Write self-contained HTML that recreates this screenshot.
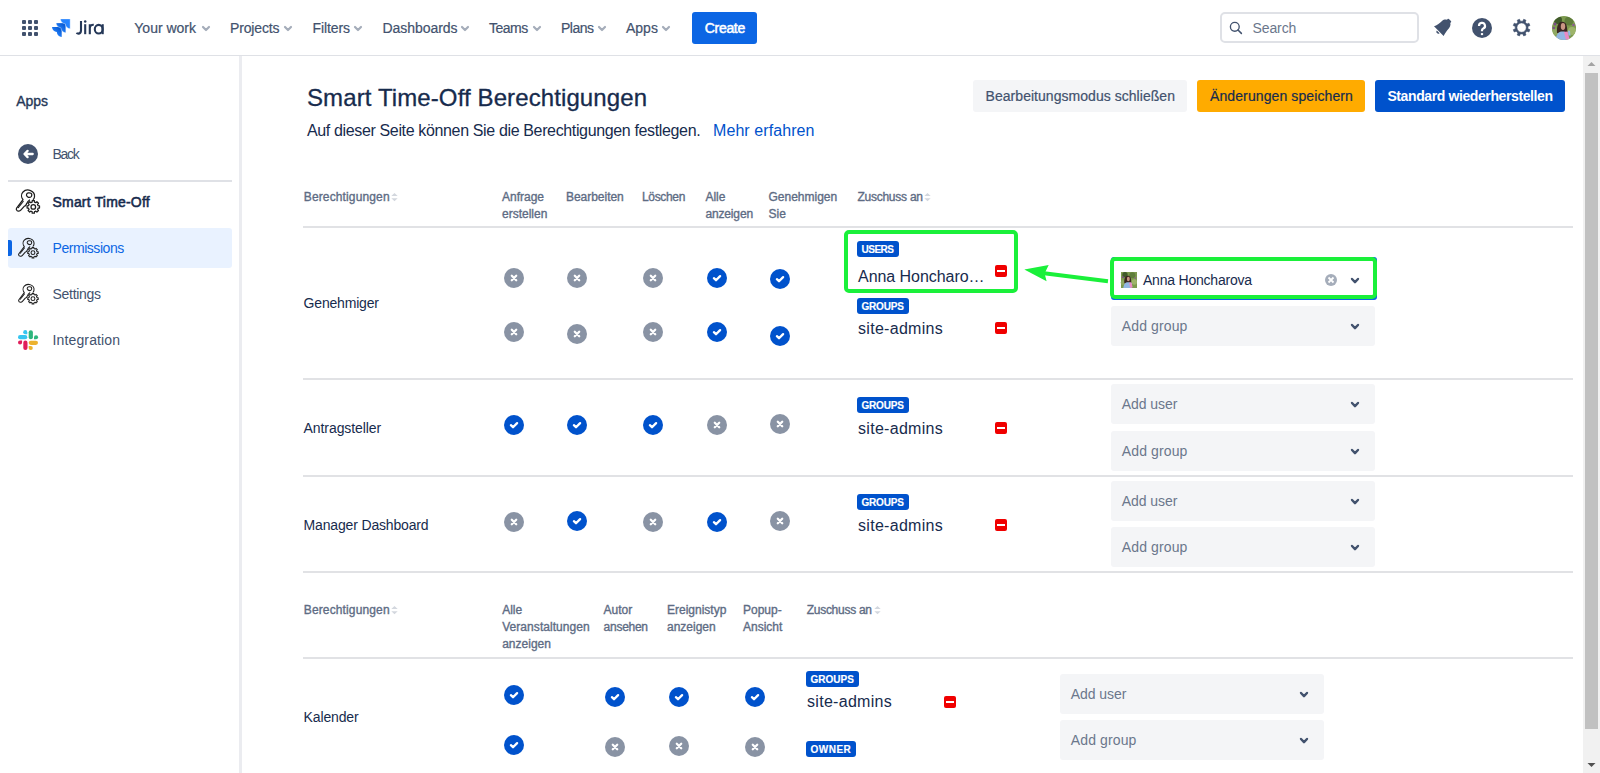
<!DOCTYPE html>
<html><head><meta charset="utf-8"><title>Smart Time-Off Berechtigungen</title>
<style>
html,body{margin:0;padding:0;width:1600px;height:773px;overflow:hidden;background:#fff;font-family:"Liberation Sans",sans-serif;}
.a{position:absolute;box-sizing:content-box;}
.t{position:absolute;white-space:nowrap;}
svg.a{display:block;overflow:visible}
</style></head><body>
<div class="a" style="left:0px;top:55px;width:1600px;height:1px;background:#dfe1e6;border-radius:0px;"></div>
<svg class="a" style="left:22px;top:20px" width="16" height="16" viewBox="0 0 16 16"><rect x="0" y="0" width="4" height="4" rx="1" fill="#42526e"/><rect x="6" y="0" width="4" height="4" rx="1" fill="#42526e"/><rect x="12" y="0" width="4" height="4" rx="1" fill="#42526e"/><rect x="0" y="6" width="4" height="4" rx="1" fill="#42526e"/><rect x="6" y="6" width="4" height="4" rx="1" fill="#42526e"/><rect x="12" y="6" width="4" height="4" rx="1" fill="#42526e"/><rect x="0" y="12" width="4" height="4" rx="1" fill="#42526e"/><rect x="6" y="12" width="4" height="4" rx="1" fill="#42526e"/><rect x="12" y="12" width="4" height="4" rx="1" fill="#42526e"/></svg>
<svg class="a" style="left:52px;top:18px" width="20" height="20" viewBox="0 0 20 20">
<defs><linearGradient id="jg" x1="0.95" y1="0.05" x2="0.35" y2="0.75"><stop offset="0" stop-color="#0050c8"/><stop offset="1" stop-color="#2684ff"/></linearGradient></defs>
<path d="M0,0 H9.7 V9.9 C7,9.7 5,7.6 4.8,4.9 C2.3,4.7 0.2,2.7 0,0 Z" transform="translate(0,9)" fill="url(#jg)"/>
<path d="M0,0 H9.7 V9.9 C7,9.7 5,7.6 4.8,4.9 C2.3,4.7 0.2,2.7 0,0 Z" transform="translate(4.1,4.9)" fill="url(#jg)" stroke="#fff" stroke-width="0.35"/>
<path d="M0,0 H9.7 V9.9 C7,9.7 5,7.6 4.8,4.9 C2.3,4.7 0.2,2.7 0,0 Z" transform="translate(8.45,0.9)" fill="#2684ff" stroke="#fff" stroke-width="0.35"/>
</svg>
<svg class="a" style="left:70px;top:14px" width="40" height="26" viewBox="70 14 40 26"><g fill="none" stroke="#253858" stroke-width="2.1" stroke-linecap="butt"><path d="M81,21 V30.2 C81,32.6 79.8,33.6 78.3,33.6 C77.6,33.6 77,33.4 76.4,33"/><path d="M85.2,24.2 V34.2"/><path d="M89.8,24.2 V34.2 M89.8,28.6 C89.8,25.8 91.3,24.6 93.8,24.7"/><ellipse cx="98.7" cy="29.2" rx="3.9" ry="4.3"/><path d="M102.7,24.2 V34.2"/></g><circle cx="85.2" cy="21.6" r="1.25" fill="#253858"/></svg>
<div class="t" style="left:134.30px;top:20.70px;font-size:14px;line-height:14px;color:#42526e;-webkit-text-stroke:0.2px #42526e;">Your work</div>
<svg class="a" style="left:202px;top:25.5px" width="8" height="5" viewBox="0 0 8 5"><path d="M1,1 L4.0,4 L7,1" fill="none" stroke="#a5adba" stroke-width="2.2" stroke-linecap="round" stroke-linejoin="round"/></svg>
<div class="t" style="left:230.00px;top:20.70px;font-size:14px;line-height:14px;color:#42526e;-webkit-text-stroke:0.2px #42526e;letter-spacing:-0.143px;">Projects</div>
<svg class="a" style="left:284px;top:25.5px" width="8" height="5" viewBox="0 0 8 5"><path d="M1,1 L4.0,4 L7,1" fill="none" stroke="#a5adba" stroke-width="2.2" stroke-linecap="round" stroke-linejoin="round"/></svg>
<div class="t" style="left:312.50px;top:20.70px;font-size:14px;line-height:14px;color:#42526e;-webkit-text-stroke:0.2px #42526e;letter-spacing:-0.083px;">Filters</div>
<svg class="a" style="left:354px;top:25.5px" width="8" height="5" viewBox="0 0 8 5"><path d="M1,1 L4.0,4 L7,1" fill="none" stroke="#a5adba" stroke-width="2.2" stroke-linecap="round" stroke-linejoin="round"/></svg>
<div class="t" style="left:382.50px;top:20.70px;font-size:14px;line-height:14px;color:#42526e;-webkit-text-stroke:0.2px #42526e;letter-spacing:-0.056px;">Dashboards</div>
<svg class="a" style="left:460.5px;top:25.5px" width="8" height="5" viewBox="0 0 8 5"><path d="M1,1 L4.0,4 L7,1" fill="none" stroke="#a5adba" stroke-width="2.2" stroke-linecap="round" stroke-linejoin="round"/></svg>
<div class="t" style="left:489.00px;top:20.70px;font-size:14px;line-height:14px;color:#42526e;-webkit-text-stroke:0.2px #42526e;letter-spacing:-0.500px;">Teams</div>
<svg class="a" style="left:532.5px;top:25.5px" width="8" height="5" viewBox="0 0 8 5"><path d="M1,1 L4.0,4 L7,1" fill="none" stroke="#a5adba" stroke-width="2.2" stroke-linecap="round" stroke-linejoin="round"/></svg>
<div class="t" style="left:561.00px;top:20.70px;font-size:14px;line-height:14px;color:#42526e;-webkit-text-stroke:0.2px #42526e;letter-spacing:-0.500px;">Plans</div>
<svg class="a" style="left:597.5px;top:25.5px" width="8" height="5" viewBox="0 0 8 5"><path d="M1,1 L4.0,4 L7,1" fill="none" stroke="#a5adba" stroke-width="2.2" stroke-linecap="round" stroke-linejoin="round"/></svg>
<div class="t" style="left:626.00px;top:20.70px;font-size:14px;line-height:14px;color:#42526e;-webkit-text-stroke:0.2px #42526e;">Apps</div>
<svg class="a" style="left:662px;top:25.5px" width="8" height="5" viewBox="0 0 8 5"><path d="M1,1 L4.0,4 L7,1" fill="none" stroke="#a5adba" stroke-width="2.2" stroke-linecap="round" stroke-linejoin="round"/></svg>
<div class="a" style="left:692px;top:12px;width:65px;height:32px;background:#0c66e4;border-radius:3px;"></div>
<div class="t" style="left:704.80px;top:21.00px;font-size:14px;line-height:14px;color:#ffffff;-webkit-text-stroke:0.5px #ffffff;letter-spacing:-0.320px;">Create</div>
<div class="a" style="left:1220px;top:12px;width:195px;height:27px;border:2px solid #dfe1e6;border-radius:5px;background:#fff"></div>
<svg class="a" style="left:1229px;top:21px" width="14" height="14" viewBox="0 0 14 14"><circle cx="5.8" cy="5.8" r="4.4" fill="none" stroke="#42526e" stroke-width="1.35"/><path d="M9,9 L12.4,12.4" stroke="#42526e" stroke-width="1.5" stroke-linecap="round"/></svg>
<div class="t" style="left:1252.50px;top:20.75px;font-size:14px;line-height:14px;color:#6b778c;letter-spacing:-0.100px;">Search</div>
<svg class="a" style="left:1428px;top:14px" width="28" height="28" viewBox="0 0 28 28"><path d="M6,12.3 L15.6,21.9 C17,19.3 18.9,16.6 21,14.2 C23,11.8 23,8.6 21,6.7 C19,4.9 16,5 14,6.9 C11.4,9.3 8.8,11.2 6,12.3 Z" fill="#42526e"/><path d="M20.2,5.8 L22.2,7.8" stroke="#42526e" stroke-width="2" stroke-linecap="round"/><path d="M8.79,16.39 A2,2 0 0 0 11.61,19.21 Z" fill="#42526e"/></svg>
<svg class="a" style="left:1472px;top:18px" width="20" height="20" viewBox="0 0 20 20"><circle cx="10" cy="10" r="10" fill="#42526e"/><path d="M7,7.9 A3,3 0 1 1 11.3,10.6 C10.5,11 10,11.5 10,12.3 V13.2" fill="none" stroke="#fff" stroke-width="2.2" stroke-linecap="butt"/><rect x="8.9" y="15.1" width="2.2" height="2" fill="#fff"/></svg>
<svg class="a" style="left:1508px;top:14px" width="28" height="28" viewBox="0 0 28 28"><path d="M20.00,13.60 L19.89,14.80 L21.94,15.68 L20.97,18.03 L18.89,17.20 L18.13,18.13 L17.20,18.89 L18.03,20.97 L15.68,21.94 L14.80,19.89 L13.60,20.00 L12.40,19.89 L11.52,21.94 L9.17,20.97 L10.00,18.89 L9.07,18.13 L8.31,17.20 L6.23,18.03 L5.26,15.68 L7.31,14.80 L7.20,13.60 L7.31,12.40 L5.26,11.52 L6.23,9.17 L8.31,10.00 L9.07,9.07 L10.00,8.31 L9.17,6.23 L11.52,5.26 L12.40,7.31 L13.60,7.20 L14.80,7.31 L15.68,5.26 L18.03,6.23 L17.20,8.31 L18.13,9.07 L18.89,10.00 L20.97,9.17 L21.94,11.52 L19.89,12.40 Z M18.3,13.6 A4.7,4.7 0 1,0 8.899999999999999,13.6 A4.7,4.7 0 1,0 18.3,13.6 Z" fill="#42526e" fill-rule="evenodd" stroke="#42526e" stroke-width="0.6" stroke-linejoin="round"/></svg>
<svg class="a" style="left:1552px;top:16px" width="24" height="24" viewBox="0 0 24 24"><defs><clipPath id="av"><circle cx="12" cy="12" r="12"/></clipPath><filter id="bl" x="-10%" y="-10%" width="120%" height="120%"><feGaussianBlur stdDeviation="0.6"/></filter></defs><g clip-path="url(#av)"><rect width="24" height="24" fill="#7d9a4e"/><g filter="url(#bl)"><circle cx="6" cy="4" r="4" fill="#3f5a2c"/><circle cx="17" cy="5" r="4.5" fill="#5f7d3a"/><circle cx="20" cy="15" r="4" fill="#9db46a"/><circle cx="3" cy="16" r="3.5" fill="#8fa862"/><circle cx="3" cy="8" r="1.5" fill="#7a4e86"/><circle cx="1.8" cy="12" r="1.2" fill="#7a4e86"/><circle cx="21.5" cy="9" r="1.3" fill="#8a5a92"/><path d="M5,17 C4.5,11 6,6 10,5.8 C14,5.6 15.5,9 15.2,17 Z" fill="#3a2620"/><ellipse cx="11" cy="10.5" rx="2.2" ry="3.4" fill="#c99684"/><path d="M3.5,24 C4,18 7,15.5 10,15.5 C13,15.5 15,16 16.5,17 L16,24 Z" fill="#92b6e4"/><path d="M12,16 L15.5,15.5 L17.5,23 L14,24 Z" fill="#ea8ac4"/><path d="M16,14.5 L18,15 L18.5,20 L16.5,19 Z" fill="#92b6e4"/></g></g></svg>
<div class="a" style="left:239px;top:56px;width:3px;height:717px;background:#ebecf0;border-radius:0px;"></div>
<div class="t" style="left:16.30px;top:94.30px;font-size:14px;line-height:14px;color:#253858;-webkit-text-stroke:0.35px #253858;letter-spacing:-0.100px;">Apps</div>
<svg class="a" style="left:18px;top:144px" width="20" height="20" viewBox="0 0 20 20"><circle cx="10" cy="10" r="10" fill="#42526e"/><path d="M14.7,10 H6.8 M9.6,6.9 L6.5,10 L9.6,13.1" fill="none" stroke="#fff" stroke-width="2.3" stroke-linecap="round" stroke-linejoin="round"/></svg>
<div class="t" style="left:52.50px;top:147.20px;font-size:14px;line-height:14px;color:#42526e;letter-spacing:-1.333px;">Back</div>
<div class="a" style="left:8px;top:180px;width:224px;height:2px;background:#dfe1e6;border-radius:0px;"></div>
<svg class="a" style="left:12px;top:186px" width="32" height="32" viewBox="0 0 32 32"><g fill="none" stroke="#1e1e1e" stroke-width="1.25" stroke-linejoin="round" stroke-linecap="round">
<path d="M11,13.7 C9.3,11.6 8.9,8.2 11,6 C12.8,4.1 16,3.6 18.6,4.6 C21.2,5.6 22.8,8.2 22.5,10.8 C22.4,12 22,12.9 21.3,13.4 M17.6,14 C16.4,14.8 15.3,16 14.8,17.4 L13.6,19.6 L12.2,20.3 L8.8,24.1 C7.8,25.3 5.9,25.6 5,24.6 C4.2,23.8 4.1,22.9 4.6,22.2 L11,13.7"/>
<path d="M14.6,8.2 C15.2,6.9 17.4,6.4 19,7.2 C20,7.8 20,9.6 19.2,10.6 C18.2,11.6 16.4,11.4 15.2,10.4 C14.5,9.8 14.3,8.9 14.6,8.2 Z"/>
<path d="M6.3,21.6 L11.2,15.4" stroke-dasharray="0.9 0.9" stroke-width="1.2"/>
<path d="M25.83,19.02 L26.06,19.72 L27.50,19.79 L27.50,22.01 L26.06,22.08 L25.83,22.78 L25.50,23.43 L26.47,24.50 L24.90,26.07 L23.83,25.10 L23.18,25.43 L22.48,25.66 L22.41,27.10 L20.19,27.10 L20.12,25.66 L19.42,25.43 L18.77,25.10 L17.70,26.07 L16.13,24.50 L17.10,23.43 L16.77,22.78 L16.54,22.08 L15.10,22.01 L15.10,19.79 L16.54,19.72 L16.77,19.02 L17.10,18.37 L16.13,17.30 L17.70,15.73 L18.77,16.70 L19.42,16.37 L20.12,16.14 L20.19,14.70 L22.41,14.70 L22.48,16.14 L23.18,16.37 L23.83,16.70 L24.90,15.73 L26.47,17.30 L25.50,18.37 Z M23.6,20.9 A2.3,2.3 0 1,0 19.0,20.9 A2.3,2.3 0 1,0 23.6,20.9 Z"/>
</g></svg>
<div class="t" style="left:52.50px;top:194.80px;font-size:14px;line-height:14px;color:#172b4d;-webkit-text-stroke:0.55px #172b4d;letter-spacing:0.192px;">Smart Time-Off</div>
<div class="a" style="left:8px;top:228px;width:224px;height:40px;background:#e9f2ff;border-radius:3px;"></div>
<div class="a" style="left:8px;top:240px;width:4px;height:16px;background:#0c66e4;border-radius:0 2px 2px 0"></div>
<svg class="a" style="left:14.75px;top:234.6px" width="27" height="27" viewBox="0 0 32 32"><g fill="none" stroke="#1e1e1e" stroke-width="1.25" stroke-linejoin="round" stroke-linecap="round">
<path d="M11,13.7 C9.3,11.6 8.9,8.2 11,6 C12.8,4.1 16,3.6 18.6,4.6 C21.2,5.6 22.8,8.2 22.5,10.8 C22.4,12 22,12.9 21.3,13.4 M17.6,14 C16.4,14.8 15.3,16 14.8,17.4 L13.6,19.6 L12.2,20.3 L8.8,24.1 C7.8,25.3 5.9,25.6 5,24.6 C4.2,23.8 4.1,22.9 4.6,22.2 L11,13.7"/>
<path d="M14.6,8.2 C15.2,6.9 17.4,6.4 19,7.2 C20,7.8 20,9.6 19.2,10.6 C18.2,11.6 16.4,11.4 15.2,10.4 C14.5,9.8 14.3,8.9 14.6,8.2 Z"/>
<path d="M6.3,21.6 L11.2,15.4" stroke-dasharray="0.9 0.9" stroke-width="1.2"/>
<path d="M25.83,19.02 L26.06,19.72 L27.50,19.79 L27.50,22.01 L26.06,22.08 L25.83,22.78 L25.50,23.43 L26.47,24.50 L24.90,26.07 L23.83,25.10 L23.18,25.43 L22.48,25.66 L22.41,27.10 L20.19,27.10 L20.12,25.66 L19.42,25.43 L18.77,25.10 L17.70,26.07 L16.13,24.50 L17.10,23.43 L16.77,22.78 L16.54,22.08 L15.10,22.01 L15.10,19.79 L16.54,19.72 L16.77,19.02 L17.10,18.37 L16.13,17.30 L17.70,15.73 L18.77,16.70 L19.42,16.37 L20.12,16.14 L20.19,14.70 L22.41,14.70 L22.48,16.14 L23.18,16.37 L23.83,16.70 L24.90,15.73 L26.47,17.30 L25.50,18.37 Z M23.6,20.9 A2.3,2.3 0 1,0 19.0,20.9 A2.3,2.3 0 1,0 23.6,20.9 Z"/>
</g></svg>
<div class="t" style="left:52.50px;top:241.00px;font-size:14px;line-height:14px;color:#0c66e4;letter-spacing:-0.450px;">Permissions</div>
<svg class="a" style="left:14.75px;top:280.6px" width="27" height="27" viewBox="0 0 32 32"><g fill="none" stroke="#1e1e1e" stroke-width="1.25" stroke-linejoin="round" stroke-linecap="round">
<path d="M11,13.7 C9.3,11.6 8.9,8.2 11,6 C12.8,4.1 16,3.6 18.6,4.6 C21.2,5.6 22.8,8.2 22.5,10.8 C22.4,12 22,12.9 21.3,13.4 M17.6,14 C16.4,14.8 15.3,16 14.8,17.4 L13.6,19.6 L12.2,20.3 L8.8,24.1 C7.8,25.3 5.9,25.6 5,24.6 C4.2,23.8 4.1,22.9 4.6,22.2 L11,13.7"/>
<path d="M14.6,8.2 C15.2,6.9 17.4,6.4 19,7.2 C20,7.8 20,9.6 19.2,10.6 C18.2,11.6 16.4,11.4 15.2,10.4 C14.5,9.8 14.3,8.9 14.6,8.2 Z"/>
<path d="M6.3,21.6 L11.2,15.4" stroke-dasharray="0.9 0.9" stroke-width="1.2"/>
<path d="M25.83,19.02 L26.06,19.72 L27.50,19.79 L27.50,22.01 L26.06,22.08 L25.83,22.78 L25.50,23.43 L26.47,24.50 L24.90,26.07 L23.83,25.10 L23.18,25.43 L22.48,25.66 L22.41,27.10 L20.19,27.10 L20.12,25.66 L19.42,25.43 L18.77,25.10 L17.70,26.07 L16.13,24.50 L17.10,23.43 L16.77,22.78 L16.54,22.08 L15.10,22.01 L15.10,19.79 L16.54,19.72 L16.77,19.02 L17.10,18.37 L16.13,17.30 L17.70,15.73 L18.77,16.70 L19.42,16.37 L20.12,16.14 L20.19,14.70 L22.41,14.70 L22.48,16.14 L23.18,16.37 L23.83,16.70 L24.90,15.73 L26.47,17.30 L25.50,18.37 Z M23.6,20.9 A2.3,2.3 0 1,0 19.0,20.9 A2.3,2.3 0 1,0 23.6,20.9 Z"/>
</g></svg>
<div class="t" style="left:52.50px;top:287.00px;font-size:14px;line-height:14px;color:#42526e;letter-spacing:-0.286px;">Settings</div>
<svg class="a" style="left:18px;top:330px" width="20" height="20" viewBox="0 0 20 20"><rect x="0" y="5.1" width="9.3" height="4.2" rx="2.1" fill="#36c5f0"/><path d="M9.3,4.2 H7.25 A2.05,2.05 0 1 1 9.3,2.15 Z" fill="#36c5f0"/>
<rect x="10.7" y="0.2" width="4.2" height="9.1" rx="2.1" fill="#2eb67d"/><path d="M16,9.3 V7.25 A2.05,2.05 0 1 1 18.05,9.3 Z" fill="#2eb67d"/>
<rect x="10.7" y="10.7" width="9.3" height="4.2" rx="2.1" fill="#ecb22e"/><path d="M10.7,16 H12.75 A2.05,2.05 0 1 1 10.7,18.05 Z" fill="#ecb22e"/>
<rect x="5.3" y="10.6" width="4.2" height="9.4" rx="2.1" fill="#e01e5a"/><path d="M4.1,10.5 V12.55 A2.05,2.05 0 1 1 2.05,10.5 Z" fill="#e01e5a"/></svg>
<div class="t" style="left:52.50px;top:333.00px;font-size:14px;line-height:14px;color:#42526e;letter-spacing:0.140px;">Integration</div>
<div class="t" style="left:307.00px;top:85.60px;font-size:24px;line-height:24px;color:#172b4d;-webkit-text-stroke:0.3px #172b4d;letter-spacing:0.107px;">Smart Time-Off Berechtigungen</div>
<div class="t" style="left:307.00px;top:123.00px;font-size:16px;line-height:16px;color:#172b4d;letter-spacing:-0.357px;">Auf dieser Seite können Sie die Berechtigungen festlegen.</div>
<div class="t" style="left:713.00px;top:123.00px;font-size:16px;line-height:16px;color:#0052cc;letter-spacing:0.083px;">Mehr erfahren</div>
<div class="a" style="left:973px;top:80px;width:214px;height:32px;background:#f4f5f7;border-radius:3px;"></div>
<div class="t" style="left:985.60px;top:89.10px;font-size:14px;line-height:14px;color:#42526e;-webkit-text-stroke:0.2px #42526e;letter-spacing:0.038px;">Bearbeitungsmodus schließen</div>
<div class="a" style="left:1197px;top:80px;width:168px;height:32px;background:#ffab00;border-radius:3px;"></div>
<div class="t" style="left:1210.00px;top:89.10px;font-size:14px;line-height:14px;color:#172b4d;-webkit-text-stroke:0.2px #172b4d;letter-spacing:0.105px;">Änderungen speichern</div>
<div class="a" style="left:1375px;top:80px;width:190px;height:32px;background:#0052cc;border-radius:3px;"></div>
<div class="t" style="left:1387.40px;top:89.10px;font-size:14px;line-height:14px;color:#ffffff;font-weight:bold;letter-spacing:-0.392px;">Standard wiederherstellen</div>
<div class="t" style="left:303.75px;top:191.00px;font-size:12px;line-height:12px;color:#5e6c84;-webkit-text-stroke:0.35px #5e6c84;letter-spacing:0.135px;">Berechtigungen</div>
<svg class="a" style="left:391.0px;top:193px" width="7" height="8.5" viewBox="0 0 7 8.5"><path d="M0.3,3.1 L3.5,0.1 L6.7,3.1 Z M0.3,5.3 L3.5,8.3 L6.7,5.3 Z" fill="#d3d7de"/></svg>
<div class="t" style="left:502.00px;top:191.00px;font-size:12px;line-height:12px;color:#5e6c84;-webkit-text-stroke:0.35px #5e6c84;">Anfrage</div>
<div class="t" style="left:502.00px;top:207.60px;font-size:12px;line-height:12px;color:#5e6c84;-webkit-text-stroke:0.35px #5e6c84;">erstellen</div>
<div class="t" style="left:566.00px;top:191.00px;font-size:12px;line-height:12px;color:#5e6c84;-webkit-text-stroke:0.35px #5e6c84;letter-spacing:-0.033px;">Bearbeiten</div>
<div class="t" style="left:642.00px;top:191.00px;font-size:12px;line-height:12px;color:#5e6c84;-webkit-text-stroke:0.35px #5e6c84;letter-spacing:-0.333px;">Löschen</div>
<div class="t" style="left:705.40px;top:191.00px;font-size:12px;line-height:12px;color:#5e6c84;-webkit-text-stroke:0.35px #5e6c84;">Alle</div>
<div class="t" style="left:705.40px;top:207.60px;font-size:12px;line-height:12px;color:#5e6c84;-webkit-text-stroke:0.35px #5e6c84;letter-spacing:-0.143px;">anzeigen</div>
<div class="t" style="left:768.50px;top:191.00px;font-size:12px;line-height:12px;color:#5e6c84;-webkit-text-stroke:0.35px #5e6c84;">Genehmigen</div>
<div class="t" style="left:768.50px;top:207.60px;font-size:12px;line-height:12px;color:#5e6c84;-webkit-text-stroke:0.35px #5e6c84;">Sie</div>
<div class="t" style="left:857.40px;top:191.00px;font-size:12px;line-height:12px;color:#5e6c84;-webkit-text-stroke:0.35px #5e6c84;letter-spacing:-0.240px;">Zuschuss an</div>
<svg class="a" style="left:924.0px;top:193px" width="7" height="8.5" viewBox="0 0 7 8.5"><path d="M0.3,3.1 L3.5,0.1 L6.7,3.1 Z M0.3,5.3 L3.5,8.3 L6.7,5.3 Z" fill="#d3d7de"/></svg>
<div class="a" style="left:303px;top:226px;width:1270px;height:2px;background:#e1e2e5;border-radius:0px;"></div>
<div class="a" style="left:303px;top:378px;width:1270px;height:2px;background:#e1e2e5;border-radius:0px;"></div>
<div class="a" style="left:303px;top:475px;width:1270px;height:2px;background:#e1e2e5;border-radius:0px;"></div>
<div class="a" style="left:303px;top:571px;width:1270px;height:2px;background:#e1e2e5;border-radius:0px;"></div>
<div class="a" style="left:303px;top:657px;width:1270px;height:2px;background:#e1e2e5;border-radius:0px;"></div>
<div class="t" style="left:303.60px;top:295.70px;font-size:14px;line-height:14px;color:#172b4d;letter-spacing:-0.189px;">Genehmiger</div>
<svg class="a" style="left:504px;top:268px" width="20" height="20" viewBox="0 0 20 20"><circle cx="10" cy="10" r="10" fill="#8993a4"/><path d="M7.8,7.8 L12.2,12.2 M12.2,7.8 L7.8,12.2" fill="none" stroke="#fff" stroke-width="2.3" stroke-linecap="round"/></svg>
<svg class="a" style="left:567px;top:268px" width="20" height="20" viewBox="0 0 20 20"><circle cx="10" cy="10" r="10" fill="#8993a4"/><path d="M7.8,7.8 L12.2,12.2 M12.2,7.8 L7.8,12.2" fill="none" stroke="#fff" stroke-width="2.3" stroke-linecap="round"/></svg>
<svg class="a" style="left:643px;top:268px" width="20" height="20" viewBox="0 0 20 20"><circle cx="10" cy="10" r="10" fill="#8993a4"/><path d="M7.8,7.8 L12.2,12.2 M12.2,7.8 L7.8,12.2" fill="none" stroke="#fff" stroke-width="2.3" stroke-linecap="round"/></svg>
<svg class="a" style="left:707px;top:268px" width="20" height="20" viewBox="0 0 20 20"><circle cx="10" cy="10" r="10" fill="#0052cc"/><path d="M6.9,10.2 L9,12.2 L13.1,8.1" fill="none" stroke="#fff" stroke-width="2.3" stroke-linecap="round" stroke-linejoin="round"/></svg>
<svg class="a" style="left:770px;top:269px" width="20" height="20" viewBox="0 0 20 20"><circle cx="10" cy="10" r="10" fill="#0052cc"/><path d="M6.9,10.2 L9,12.2 L13.1,8.1" fill="none" stroke="#fff" stroke-width="2.3" stroke-linecap="round" stroke-linejoin="round"/></svg>
<svg class="a" style="left:504px;top:322px" width="20" height="20" viewBox="0 0 20 20"><circle cx="10" cy="10" r="10" fill="#8993a4"/><path d="M7.8,7.8 L12.2,12.2 M12.2,7.8 L7.8,12.2" fill="none" stroke="#fff" stroke-width="2.3" stroke-linecap="round"/></svg>
<svg class="a" style="left:567px;top:324px" width="20" height="20" viewBox="0 0 20 20"><circle cx="10" cy="10" r="10" fill="#8993a4"/><path d="M7.8,7.8 L12.2,12.2 M12.2,7.8 L7.8,12.2" fill="none" stroke="#fff" stroke-width="2.3" stroke-linecap="round"/></svg>
<svg class="a" style="left:643px;top:322px" width="20" height="20" viewBox="0 0 20 20"><circle cx="10" cy="10" r="10" fill="#8993a4"/><path d="M7.8,7.8 L12.2,12.2 M12.2,7.8 L7.8,12.2" fill="none" stroke="#fff" stroke-width="2.3" stroke-linecap="round"/></svg>
<svg class="a" style="left:707px;top:322px" width="20" height="20" viewBox="0 0 20 20"><circle cx="10" cy="10" r="10" fill="#0052cc"/><path d="M6.9,10.2 L9,12.2 L13.1,8.1" fill="none" stroke="#fff" stroke-width="2.3" stroke-linecap="round" stroke-linejoin="round"/></svg>
<svg class="a" style="left:770px;top:326px" width="20" height="20" viewBox="0 0 20 20"><circle cx="10" cy="10" r="10" fill="#0052cc"/><path d="M6.9,10.2 L9,12.2 L13.1,8.1" fill="none" stroke="#fff" stroke-width="2.3" stroke-linecap="round" stroke-linejoin="round"/></svg>
<div class="t" style="left:303.60px;top:420.50px;font-size:14px;line-height:14px;color:#172b4d;letter-spacing:-0.083px;">Antragsteller</div>
<svg class="a" style="left:504px;top:415px" width="20" height="20" viewBox="0 0 20 20"><circle cx="10" cy="10" r="10" fill="#0052cc"/><path d="M6.9,10.2 L9,12.2 L13.1,8.1" fill="none" stroke="#fff" stroke-width="2.3" stroke-linecap="round" stroke-linejoin="round"/></svg>
<svg class="a" style="left:567px;top:415px" width="20" height="20" viewBox="0 0 20 20"><circle cx="10" cy="10" r="10" fill="#0052cc"/><path d="M6.9,10.2 L9,12.2 L13.1,8.1" fill="none" stroke="#fff" stroke-width="2.3" stroke-linecap="round" stroke-linejoin="round"/></svg>
<svg class="a" style="left:643px;top:415px" width="20" height="20" viewBox="0 0 20 20"><circle cx="10" cy="10" r="10" fill="#0052cc"/><path d="M6.9,10.2 L9,12.2 L13.1,8.1" fill="none" stroke="#fff" stroke-width="2.3" stroke-linecap="round" stroke-linejoin="round"/></svg>
<svg class="a" style="left:707px;top:415px" width="20" height="20" viewBox="0 0 20 20"><circle cx="10" cy="10" r="10" fill="#8993a4"/><path d="M7.8,7.8 L12.2,12.2 M12.2,7.8 L7.8,12.2" fill="none" stroke="#fff" stroke-width="2.3" stroke-linecap="round"/></svg>
<svg class="a" style="left:770px;top:414px" width="20" height="20" viewBox="0 0 20 20"><circle cx="10" cy="10" r="10" fill="#8993a4"/><path d="M7.8,7.8 L12.2,12.2 M12.2,7.8 L7.8,12.2" fill="none" stroke="#fff" stroke-width="2.3" stroke-linecap="round"/></svg>
<div class="t" style="left:303.60px;top:518.00px;font-size:14px;line-height:14px;color:#172b4d;letter-spacing:-0.162px;">Manager Dashboard</div>
<svg class="a" style="left:504px;top:512px" width="20" height="20" viewBox="0 0 20 20"><circle cx="10" cy="10" r="10" fill="#8993a4"/><path d="M7.8,7.8 L12.2,12.2 M12.2,7.8 L7.8,12.2" fill="none" stroke="#fff" stroke-width="2.3" stroke-linecap="round"/></svg>
<svg class="a" style="left:567px;top:511px" width="20" height="20" viewBox="0 0 20 20"><circle cx="10" cy="10" r="10" fill="#0052cc"/><path d="M6.9,10.2 L9,12.2 L13.1,8.1" fill="none" stroke="#fff" stroke-width="2.3" stroke-linecap="round" stroke-linejoin="round"/></svg>
<svg class="a" style="left:643px;top:512px" width="20" height="20" viewBox="0 0 20 20"><circle cx="10" cy="10" r="10" fill="#8993a4"/><path d="M7.8,7.8 L12.2,12.2 M12.2,7.8 L7.8,12.2" fill="none" stroke="#fff" stroke-width="2.3" stroke-linecap="round"/></svg>
<svg class="a" style="left:707px;top:512px" width="20" height="20" viewBox="0 0 20 20"><circle cx="10" cy="10" r="10" fill="#0052cc"/><path d="M6.9,10.2 L9,12.2 L13.1,8.1" fill="none" stroke="#fff" stroke-width="2.3" stroke-linecap="round" stroke-linejoin="round"/></svg>
<svg class="a" style="left:770px;top:511px" width="20" height="20" viewBox="0 0 20 20"><circle cx="10" cy="10" r="10" fill="#8993a4"/><path d="M7.8,7.8 L12.2,12.2 M12.2,7.8 L7.8,12.2" fill="none" stroke="#fff" stroke-width="2.3" stroke-linecap="round"/></svg>
<div class="a" style="left:857px;top:241px;width:42px;height:16px;background:#0052cc;border-radius:3px;"></div><div class="t" style="left:861.50px;top:244.80px;font-size:10px;line-height:10px;color:#ffffff;font-weight:bold;-webkit-text-stroke:0.15px #ffffff;letter-spacing:-0.500px;">USERS</div>
<div class="t" style="left:858.00px;top:268.50px;font-size:16px;line-height:16px;color:#172b4d;letter-spacing:-0.046px;">Anna Honcharo…</div>
<div class="a" style="left:995px;top:265px;width:12px;height:12px;background:#f00000;border-radius:2px"><div class="a" style="left:2px;top:5px;width:8px;height:2px;background:#fff"></div></div>
<div class="a" style="left:857px;top:298px;width:52px;height:16px;background:#0052cc;border-radius:3px;"></div><div class="t" style="left:861.50px;top:301.80px;font-size:10px;line-height:10px;color:#ffffff;font-weight:bold;-webkit-text-stroke:0.15px #ffffff;letter-spacing:-0.200px;">GROUPS</div>
<div class="t" style="left:858.00px;top:320.50px;font-size:16px;line-height:16px;color:#172b4d;letter-spacing:0.300px;">site-admins</div>
<div class="a" style="left:995px;top:322px;width:12px;height:12px;background:#f00000;border-radius:2px"><div class="a" style="left:2px;top:5px;width:8px;height:2px;background:#fff"></div></div>
<div class="a" style="left:857px;top:397px;width:52px;height:16px;background:#0052cc;border-radius:3px;"></div><div class="t" style="left:861.50px;top:400.80px;font-size:10px;line-height:10px;color:#ffffff;font-weight:bold;-webkit-text-stroke:0.15px #ffffff;letter-spacing:-0.200px;">GROUPS</div>
<div class="t" style="left:858.00px;top:420.60px;font-size:16px;line-height:16px;color:#172b4d;letter-spacing:0.300px;">site-admins</div>
<div class="a" style="left:995px;top:422px;width:12px;height:12px;background:#f00000;border-radius:2px"><div class="a" style="left:2px;top:5px;width:8px;height:2px;background:#fff"></div></div>
<div class="a" style="left:857px;top:494px;width:52px;height:16px;background:#0052cc;border-radius:3px;"></div><div class="t" style="left:861.50px;top:497.80px;font-size:10px;line-height:10px;color:#ffffff;font-weight:bold;-webkit-text-stroke:0.15px #ffffff;letter-spacing:-0.200px;">GROUPS</div>
<div class="t" style="left:858.00px;top:517.50px;font-size:16px;line-height:16px;color:#172b4d;letter-spacing:0.300px;">site-admins</div>
<div class="a" style="left:995px;top:519px;width:12px;height:12px;background:#f00000;border-radius:2px"><div class="a" style="left:2px;top:5px;width:8px;height:2px;background:#fff"></div></div>
<div class="a" style="left:844px;top:230px;width:166px;height:55px;border:4px solid #1af03a;border-radius:5px"></div>
<svg class="a" style="left:1000px;top:250px" width="120" height="50" viewBox="0 0 120 50"><path d="M44,23.2 L108,31.3" stroke="#1af03a" stroke-width="4"/><path d="M24.3,19.6 L48.7,15.1 L44.6,23.4 L46.6,31.3 Z" fill="#1af03a"/></svg>
<div class="a" style="left:1111px;top:257px;width:262px;height:39px;border:2px solid #0c66e4;border-radius:3px;background:#fff"></div>
<svg class="a" style="left:1121px;top:272px" width="16" height="16" viewBox="0 0 24 24"><defs><filter id="bl2" x="-10%" y="-10%" width="120%" height="120%"><feGaussianBlur stdDeviation="0.7"/></filter></defs><rect width="24" height="24" fill="#7d9a4e"/><g filter="url(#bl2)"><circle cx="6" cy="4" r="4" fill="#3f5a2c"/><circle cx="17" cy="5" r="4.5" fill="#5f7d3a"/><circle cx="20" cy="15" r="4" fill="#9db46a"/><circle cx="3" cy="16" r="3.5" fill="#8fa862"/><circle cx="3" cy="8" r="1.5" fill="#7a4e86"/><circle cx="21.5" cy="9" r="1.3" fill="#8a5a92"/><path d="M5,17 C4.5,11 6,6 10,5.8 C14,5.6 15.5,9 15.2,17 Z" fill="#3a2620"/><ellipse cx="11" cy="10.5" rx="2.2" ry="3.4" fill="#c99684"/><path d="M3.5,24 C4,18 7,15.5 10,15.5 C13,15.5 15,16 16.5,17 L16,24 Z" fill="#92b6e4"/><path d="M12,16 L15.5,15.5 L17.5,23 L14,24 Z" fill="#ea8ac4"/></g></svg>
<div class="t" style="left:1143.00px;top:272.80px;font-size:14px;line-height:14px;color:#172b4d;letter-spacing:-0.214px;">Anna Honcharova</div>
<svg class="a" style="left:1325px;top:274px" width="12" height="12" viewBox="0 0 12 12"><circle cx="6" cy="6" r="6" fill="#a5adba"/><path d="M3.5,3.5 L8.5,8.5 M8.5,3.5 L3.5,8.5" stroke="#fff" stroke-width="1.8" stroke-linecap="butt"/></svg>
<svg class="a" style="left:1351px;top:277.6px" width="8" height="5.2" viewBox="0 0 8 5.2"><path d="M1,1 L4.0,4.2 L7,1" fill="none" stroke="#42526e" stroke-width="2.4" stroke-linecap="round" stroke-linejoin="round"/></svg>
<div class="a" style="left:1110px;top:257px;width:259px;height:34px;border:4px solid #1af03a;border-radius:5px"></div>
<div class="a" style="left:1111px;top:306px;width:264px;height:39.5px;background:#f4f5f7;border-radius:3px;"></div><div class="t" style="left:1121.80px;top:319.00px;font-size:14px;line-height:14px;color:#6b778c;letter-spacing:0.125px;">Add group</div><svg class="a" style="left:1351px;top:323.6px" width="8" height="5.2" viewBox="0 0 8 5.2"><path d="M1,1 L4.0,4.2 L7,1" fill="none" stroke="#42526e" stroke-width="2.4" stroke-linecap="round" stroke-linejoin="round"/></svg>
<div class="a" style="left:1111px;top:384px;width:264px;height:39.5px;background:#f4f5f7;border-radius:3px;"></div><div class="t" style="left:1121.80px;top:397.00px;font-size:14px;line-height:14px;color:#6b778c;letter-spacing:-0.071px;">Add user</div><svg class="a" style="left:1351px;top:401.6px" width="8" height="5.2" viewBox="0 0 8 5.2"><path d="M1,1 L4.0,4.2 L7,1" fill="none" stroke="#42526e" stroke-width="2.4" stroke-linecap="round" stroke-linejoin="round"/></svg>
<div class="a" style="left:1111px;top:431px;width:264px;height:39.5px;background:#f4f5f7;border-radius:3px;"></div><div class="t" style="left:1121.80px;top:444.00px;font-size:14px;line-height:14px;color:#6b778c;letter-spacing:0.125px;">Add group</div><svg class="a" style="left:1351px;top:448.6px" width="8" height="5.2" viewBox="0 0 8 5.2"><path d="M1,1 L4.0,4.2 L7,1" fill="none" stroke="#42526e" stroke-width="2.4" stroke-linecap="round" stroke-linejoin="round"/></svg>
<div class="a" style="left:1111px;top:481px;width:264px;height:39.5px;background:#f4f5f7;border-radius:3px;"></div><div class="t" style="left:1121.80px;top:494.00px;font-size:14px;line-height:14px;color:#6b778c;letter-spacing:-0.071px;">Add user</div><svg class="a" style="left:1351px;top:498.6px" width="8" height="5.2" viewBox="0 0 8 5.2"><path d="M1,1 L4.0,4.2 L7,1" fill="none" stroke="#42526e" stroke-width="2.4" stroke-linecap="round" stroke-linejoin="round"/></svg>
<div class="a" style="left:1111px;top:527px;width:264px;height:39.5px;background:#f4f5f7;border-radius:3px;"></div><div class="t" style="left:1121.80px;top:540.00px;font-size:14px;line-height:14px;color:#6b778c;letter-spacing:0.125px;">Add group</div><svg class="a" style="left:1351px;top:544.6px" width="8" height="5.2" viewBox="0 0 8 5.2"><path d="M1,1 L4.0,4.2 L7,1" fill="none" stroke="#42526e" stroke-width="2.4" stroke-linecap="round" stroke-linejoin="round"/></svg>
<div class="t" style="left:303.75px;top:604.00px;font-size:12px;line-height:12px;color:#5e6c84;-webkit-text-stroke:0.35px #5e6c84;letter-spacing:0.135px;">Berechtigungen</div>
<svg class="a" style="left:391.0px;top:606px" width="7" height="8.5" viewBox="0 0 7 8.5"><path d="M0.3,3.1 L3.5,0.1 L6.7,3.1 Z M0.3,5.3 L3.5,8.3 L6.7,5.3 Z" fill="#d3d7de"/></svg>
<div class="t" style="left:502.20px;top:604.00px;font-size:12px;line-height:12px;color:#5e6c84;-webkit-text-stroke:0.35px #5e6c84;">Alle</div>
<div class="t" style="left:502.20px;top:620.70px;font-size:12px;line-height:12px;color:#5e6c84;-webkit-text-stroke:0.35px #5e6c84;letter-spacing:0.057px;">Veranstaltungen</div>
<div class="t" style="left:502.20px;top:638.20px;font-size:12px;line-height:12px;color:#5e6c84;-webkit-text-stroke:0.35px #5e6c84;">anzeigen</div>
<div class="t" style="left:603.60px;top:604.00px;font-size:12px;line-height:12px;color:#5e6c84;-webkit-text-stroke:0.35px #5e6c84;">Autor</div>
<div class="t" style="left:603.60px;top:620.70px;font-size:12px;line-height:12px;color:#5e6c84;-webkit-text-stroke:0.35px #5e6c84;letter-spacing:-0.267px;">ansehen</div>
<div class="t" style="left:667.00px;top:604.00px;font-size:12px;line-height:12px;color:#5e6c84;-webkit-text-stroke:0.35px #5e6c84;">Ereignistyp</div>
<div class="t" style="left:667.00px;top:620.70px;font-size:12px;line-height:12px;color:#5e6c84;-webkit-text-stroke:0.35px #5e6c84;">anzeigen</div>
<div class="t" style="left:743.00px;top:604.00px;font-size:12px;line-height:12px;color:#5e6c84;-webkit-text-stroke:0.35px #5e6c84;">Popup-</div>
<div class="t" style="left:743.00px;top:620.70px;font-size:12px;line-height:12px;color:#5e6c84;-webkit-text-stroke:0.35px #5e6c84;">Ansicht</div>
<div class="t" style="left:806.70px;top:604.00px;font-size:12px;line-height:12px;color:#5e6c84;-webkit-text-stroke:0.35px #5e6c84;letter-spacing:-0.270px;">Zuschuss an</div>
<svg class="a" style="left:873.5px;top:606px" width="7" height="8.5" viewBox="0 0 7 8.5"><path d="M0.3,3.1 L3.5,0.1 L6.7,3.1 Z M0.3,5.3 L3.5,8.3 L6.7,5.3 Z" fill="#d3d7de"/></svg>
<div class="t" style="left:303.60px;top:710.40px;font-size:14px;line-height:14px;color:#172b4d;letter-spacing:-0.143px;">Kalender</div>
<svg class="a" style="left:504px;top:685px" width="20" height="20" viewBox="0 0 20 20"><circle cx="10" cy="10" r="10" fill="#0052cc"/><path d="M6.9,10.2 L9,12.2 L13.1,8.1" fill="none" stroke="#fff" stroke-width="2.3" stroke-linecap="round" stroke-linejoin="round"/></svg>
<svg class="a" style="left:605px;top:687px" width="20" height="20" viewBox="0 0 20 20"><circle cx="10" cy="10" r="10" fill="#0052cc"/><path d="M6.9,10.2 L9,12.2 L13.1,8.1" fill="none" stroke="#fff" stroke-width="2.3" stroke-linecap="round" stroke-linejoin="round"/></svg>
<svg class="a" style="left:669px;top:687px" width="20" height="20" viewBox="0 0 20 20"><circle cx="10" cy="10" r="10" fill="#0052cc"/><path d="M6.9,10.2 L9,12.2 L13.1,8.1" fill="none" stroke="#fff" stroke-width="2.3" stroke-linecap="round" stroke-linejoin="round"/></svg>
<svg class="a" style="left:745px;top:687px" width="20" height="20" viewBox="0 0 20 20"><circle cx="10" cy="10" r="10" fill="#0052cc"/><path d="M6.9,10.2 L9,12.2 L13.1,8.1" fill="none" stroke="#fff" stroke-width="2.3" stroke-linecap="round" stroke-linejoin="round"/></svg>
<svg class="a" style="left:504px;top:735px" width="20" height="20" viewBox="0 0 20 20"><circle cx="10" cy="10" r="10" fill="#0052cc"/><path d="M6.9,10.2 L9,12.2 L13.1,8.1" fill="none" stroke="#fff" stroke-width="2.3" stroke-linecap="round" stroke-linejoin="round"/></svg>
<svg class="a" style="left:605px;top:737px" width="20" height="20" viewBox="0 0 20 20"><circle cx="10" cy="10" r="10" fill="#8993a4"/><path d="M7.8,7.8 L12.2,12.2 M12.2,7.8 L7.8,12.2" fill="none" stroke="#fff" stroke-width="2.3" stroke-linecap="round"/></svg>
<svg class="a" style="left:669px;top:736px" width="20" height="20" viewBox="0 0 20 20"><circle cx="10" cy="10" r="10" fill="#8993a4"/><path d="M7.8,7.8 L12.2,12.2 M12.2,7.8 L7.8,12.2" fill="none" stroke="#fff" stroke-width="2.3" stroke-linecap="round"/></svg>
<svg class="a" style="left:745px;top:737px" width="20" height="20" viewBox="0 0 20 20"><circle cx="10" cy="10" r="10" fill="#8993a4"/><path d="M7.8,7.8 L12.2,12.2 M12.2,7.8 L7.8,12.2" fill="none" stroke="#fff" stroke-width="2.3" stroke-linecap="round"/></svg>
<div class="a" style="left:806px;top:671px;width:53px;height:16px;background:#0052cc;border-radius:3px;"></div><div class="t" style="left:810.50px;top:674.80px;font-size:10px;line-height:10px;color:#ffffff;font-weight:bold;-webkit-text-stroke:0.15px #ffffff;">GROUPS</div>
<div class="t" style="left:807.00px;top:694.20px;font-size:16px;line-height:16px;color:#172b4d;letter-spacing:0.300px;">site-admins</div>
<div class="a" style="left:944px;top:696px;width:12px;height:12px;background:#f00000;border-radius:2px"><div class="a" style="left:2px;top:5px;width:8px;height:2px;background:#fff"></div></div>
<div class="a" style="left:806px;top:741px;width:50px;height:16px;background:#0052cc;border-radius:3px;"></div><div class="t" style="left:810.50px;top:744.80px;font-size:10px;line-height:10px;color:#ffffff;font-weight:bold;-webkit-text-stroke:0.15px #ffffff;letter-spacing:0.500px;">OWNER</div>
<div class="a" style="left:1060px;top:674px;width:264px;height:39.5px;background:#f4f5f7;border-radius:3px;"></div><div class="t" style="left:1070.80px;top:687.00px;font-size:14px;line-height:14px;color:#6b778c;letter-spacing:-0.071px;">Add user</div><svg class="a" style="left:1300px;top:691.6px" width="8" height="5.2" viewBox="0 0 8 5.2"><path d="M1,1 L4.0,4.2 L7,1" fill="none" stroke="#42526e" stroke-width="2.4" stroke-linecap="round" stroke-linejoin="round"/></svg>
<div class="a" style="left:1060px;top:720px;width:264px;height:39.5px;background:#f4f5f7;border-radius:3px;"></div><div class="t" style="left:1070.80px;top:733.00px;font-size:14px;line-height:14px;color:#6b778c;letter-spacing:0.125px;">Add group</div><svg class="a" style="left:1300px;top:737.6px" width="8" height="5.2" viewBox="0 0 8 5.2"><path d="M1,1 L4.0,4.2 L7,1" fill="none" stroke="#42526e" stroke-width="2.4" stroke-linecap="round" stroke-linejoin="round"/></svg>
<div class="a" style="left:1583px;top:56px;width:17px;height:717px;background:#f1f1f1;border-radius:0px;"></div>
<div class="a" style="left:1585px;top:73px;width:13px;height:656px;background:#c1c1c1;border-radius:0px;"></div>
<svg class="a" style="left:1585px;top:59px" width="13" height="10" viewBox="0 0 13 10"><path d="M2.5,7 L6.5,3 L10.5,7 Z" fill="#a3a3a3"/></svg>
<svg class="a" style="left:1585px;top:760px" width="13" height="10" viewBox="0 0 13 10"><path d="M2.5,3 L6.5,7 L10.5,3 Z" fill="#505050"/></svg>
</body></html>
